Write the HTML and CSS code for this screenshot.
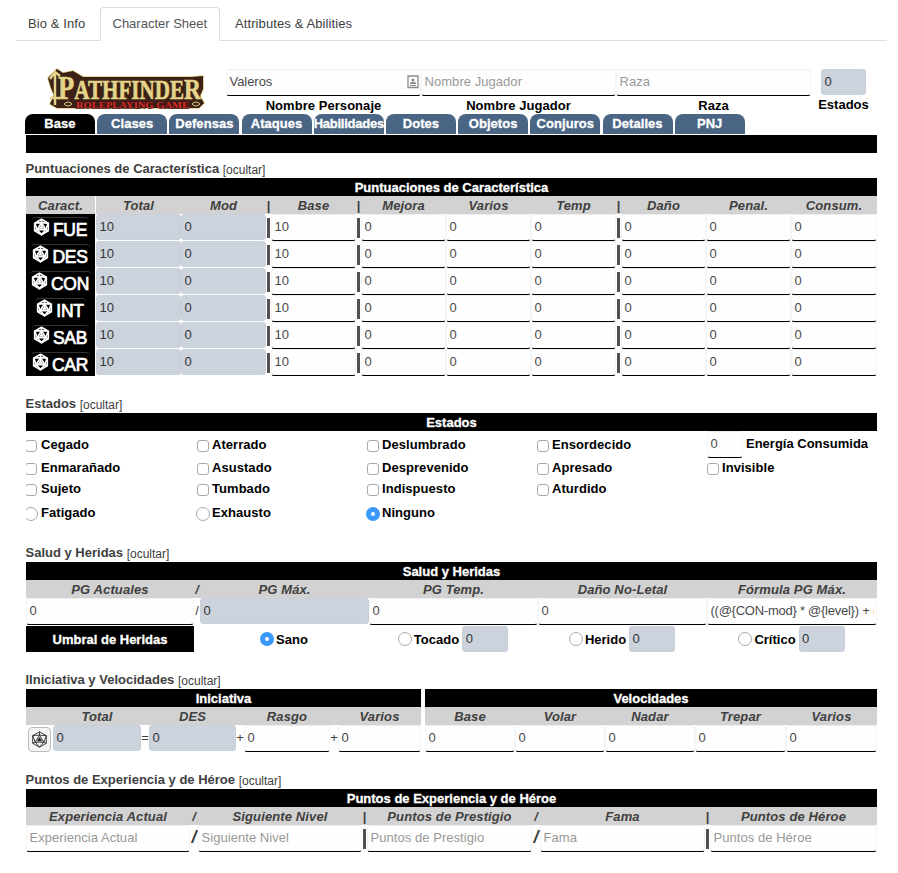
FILE: index.html
```html
<!DOCTYPE html>
<html lang="es">
<head>
<meta charset="utf-8">
<title>Character Sheet</title>
<link rel="stylesheet" href="styles.css">
</head>
<body>
<svg width="0" height="0" class="defs" aria-hidden="true">
  <symbol id="d20" viewBox="0 0 20 20">
    <g fill="none" stroke="currentColor" stroke-linejoin="round">
      <path d="M10 1 18 5.500V14.500L10 19 2 14.500V5.500Z"/>
      <path d="M10 4.800 15 13.200H5Z"/>
      <path d="M10 1V4.800M2 5.500 10 4.800 18 5.500M2 5.500 5 13.200 2 14.500M18 5.500 15 13.200 18 14.500M5 13.200 10 19 15 13.200"/>
    </g>
    <path d="M10 7 13 12H7Z" fill="currentColor"/>
  </symbol>
</svg>

<nav class="page-tabs">
  <a>Bio &amp; Info</a><a class="active">Character Sheet</a><a>Attributes &amp; Abilities</a>
</nav>

<main class="sheet">
  <header class="top">
    <svg class="logo" viewBox="0 0 158 42" role="img">
      <path class="rim" d="M1 10 10 1 16 5 26 3 36 9H145L156 8V21L153 28 157 35 152 40H10L3 36 7 27 4 20Z"/>
      <path class="plate" d="M1 10 10 1 16 5 26 3 36 9H145L156 8V21L153 28 157 35 152 40H10L3 36 7 27 4 20Z"/>
      <path class="sword" d="M8 4V37M3 11 8 4 13 8M3 30H13"/>
      <text class="name" x="11" y="31" textLength="143" lengthAdjust="spacingAndGlyphs"><tspan font-size="34">P</tspan><tspan font-size="27">ATHFINDE</tspan><tspan font-size="30">R</tspan></text>
      <text class="sub" x="29" y="39.500" font-size="9" textLength="113" lengthAdjust="spacingAndGlyphs">ROLEPLAYING GAME</text>
      <path class="curl" d="M17 36q4-4 8 0q-4 4-8 0M145 36q4-4 8 0q-4 4-8 0"/>
    </svg>
    <div class="ident">
      <div class="f named">Valeros
        <svg width="12" height="14" viewBox="0 0 12 14"><path d="M1 1H11V12.500H1Z" fill="none" stroke="#8a8a8a" stroke-width="1.300"/><circle cx="6" cy="5" r="1.500" fill="#8a8a8a"/><path d="M3 9V7.500Q6 6.500 9 7.500V9ZM3 10H9V11H3Z" fill="#8a8a8a"/></svg>
      </div>
      <label>Nombre Personaje</label>
    </div>
    <div class="ident"><div class="f ph">Nombre Jugador</div><label>Nombre Jugador</label></div>
    <div class="ident"><div class="f ph">Raza</div><label>Raza</label></div>
    <div class="ident state"><div class="f off">0</div><label>Estados</label></div>
  </header>

  <nav class="sheet-tabs">
    <a class="active">Base</a><a>Clases</a><a>Defensas</a><a>Ataques</a><a class="tight">Habilidades</a><a>Dotes</a><a>Objetos</a><a>Conjuros</a><a>Detalles</a><a>PNJ</a>
  </nav>
  <div class="bar"></div>

  <section>
    <h2>Puntuaciones de Característica <small>[ocultar]</small></h2>
    <div class="bar">Puntuaciones de Característica</div>
    <div class="scores">
      <div class="row head"><b>Caract.</b><i class="gap"></i><b>Total</b><b>Mod</b><b>|</b><b>Base</b><b>|</b><b>Mejora</b><b>Varios</b><b>Temp</b><b>|</b><b>Daño</b><b>Penal.</b><b>Consum.</b></div>
      <div class="row"><div class="stat"><span><svg><use href="#d20"/></svg>FUE</span></div><i></i><div class="f off">10</div><div class="f off">0</div><i class="v"></i><div class="f">10</div><i class="v"></i><div class="f">0</div><div class="f">0</div><div class="f">0</div><i class="v"></i><div class="f">0</div><div class="f">0</div><div class="f">0</div></div>
      <div class="row"><div class="stat"><span><svg><use href="#d20"/></svg>DES</span></div><i></i><div class="f off">10</div><div class="f off">0</div><i class="v"></i><div class="f">10</div><i class="v"></i><div class="f">0</div><div class="f">0</div><div class="f">0</div><i class="v"></i><div class="f">0</div><div class="f">0</div><div class="f">0</div></div>
      <div class="row"><div class="stat"><span><svg><use href="#d20"/></svg>CON</span></div><i></i><div class="f off">10</div><div class="f off">0</div><i class="v"></i><div class="f">10</div><i class="v"></i><div class="f">0</div><div class="f">0</div><div class="f">0</div><i class="v"></i><div class="f">0</div><div class="f">0</div><div class="f">0</div></div>
      <div class="row"><div class="stat"><span><svg><use href="#d20"/></svg>INT</span></div><i></i><div class="f off">10</div><div class="f off">0</div><i class="v"></i><div class="f">10</div><i class="v"></i><div class="f">0</div><div class="f">0</div><div class="f">0</div><i class="v"></i><div class="f">0</div><div class="f">0</div><div class="f">0</div></div>
      <div class="row"><div class="stat"><span><svg><use href="#d20"/></svg>SAB</span></div><i></i><div class="f off">10</div><div class="f off">0</div><i class="v"></i><div class="f">10</div><i class="v"></i><div class="f">0</div><div class="f">0</div><div class="f">0</div><i class="v"></i><div class="f">0</div><div class="f">0</div><div class="f">0</div></div>
      <div class="row"><div class="stat"><span><svg><use href="#d20"/></svg>CAR</span></div><i></i><div class="f off">10</div><div class="f off">0</div><i class="v"></i><div class="f">10</div><i class="v"></i><div class="f">0</div><div class="f">0</div><div class="f">0</div><i class="v"></i><div class="f">0</div><div class="f">0</div><div class="f">0</div></div>
    </div>
  </section>

  <section>
    <h2>Estados <small>[ocultar]</small></h2>
    <div class="bar">Estados</div>
    <div class="conditions">
      <label><i class="check"></i>Cegado</label><label><i class="check"></i>Aterrado</label><label><i class="check"></i>Deslumbrado</label><label><i class="check"></i>Ensordecido</label><div class="energy"><div class="f">0</div><label>Energía Consumida</label></div>
      <label><i class="check"></i>Enmarañado</label><label><i class="check"></i>Asustado</label><label><i class="check"></i>Desprevenido</label><label><i class="check"></i>Apresado</label><label><i class="check"></i>Invisible</label>
      <label><i class="check"></i>Sujeto</label><label><i class="check"></i>Tumbado</label><label><i class="check"></i>Indispuesto</label><label><i class="check"></i>Aturdido</label><span></span>
      <label><i class="radio"></i>Fatigado</label><label><i class="radio"></i>Exhausto</label><label><i class="radio on"></i>Ninguno</label>
    </div>
  </section>

  <section class="s3">
    <h2>Salud y Heridas <small>[ocultar]</small></h2>
    <div class="bar">Salud y Heridas</div>
    <div class="health">
      <div class="row head"><b>PG Actuales</b><b>/</b><b>PG Máx.</b><b>PG Temp.</b><b>Daño No-Letal</b><b>Fórmula PG Máx.</b></div>
      <div class="row"><div class="f">0</div><span class="op">/</span><div class="f off">0</div><div class="f">0</div><div class="f">0</div><div class="f"><span class="clip">((@{CON-mod} * @{level}) + @{</span></div></div>
      <div class="row wounds"><div class="threshold">Umbral de Heridas</div><span></span>
        <label><i class="radio on"></i>Sano</label>
        <label><i class="radio"></i>Tocado<span class="f off">0</span></label>
        <label><i class="radio"></i>Herido<span class="f off">0</span></label>
        <label><i class="radio"></i>Crítico<span class="f off">0</span></label>
      </div>
    </div>
  </section>

  <section class="s4">
    <h2>IIniciativa y Velocidades <small>[ocultar]</small></h2>
    <div class="pair">
      <div class="init">
        <div class="bar">Iniciativa</div>
        <div class="row head"><b></b><b>Total</b><b></b><b>DES</b><b></b><b>Rasgo</b><b></b><b>Varios</b></div>
        <div class="row"><span class="roll"><svg><use href="#d20"/></svg></span><div class="f off">0</div><span class="op">=</span><div class="f off">0</div><span class="op">+</span><div class="f">0</div><span class="op">+</span><div class="f">0</div></div>
      </div>
      <div class="speeds">
        <div class="bar">Velocidades</div>
        <div class="row head"><b>Base</b><b>Volar</b><b>Nadar</b><b>Trepar</b><b>Varios</b></div>
        <div class="row"><div class="f">0</div><div class="f">0</div><div class="f">0</div><div class="f">0</div><div class="f">0</div></div>
      </div>
    </div>
  </section>

  <section class="s5">
    <h2>Puntos de Experiencia y de Héroe <small>[ocultar]</small></h2>
    <div class="bar">Puntos de Experiencia y de Héroe</div>
    <div class="xp">
      <div class="row head"><b>Experiencia Actual</b><b>/</b><b>Siguiente Nivel</b><b>|</b><b>Puntos de Prestigio</b><b>/</b><b>Fama</b><b>|</b><b>Puntos de Héroe</b></div>
      <div class="row"><div class="f ph">Experiencia Actual</div><span class="slash">/</span><div class="f ph">Siguiente Nivel</div><i class="v"></i><div class="f ph">Puntos de Prestigio</div><span class="slash">/</span><div class="f ph">Fama</div><i class="v"></i><div class="f ph">Puntos de Héroe</div></div>
    </div>
  </section>
</main>
</body>
</html>
```
FILE: styles.css
```css
* { box-sizing: border-box; }
body {
  margin: 0;
  height: 873px;
  overflow: hidden;
  background: #fff;
  color: #404040;
  font: 13px/18px "Liberation Sans", Arial, sans-serif;
}
.defs { position: absolute; }

.page-tabs {
  display: flex;
  height: 41px;
  margin: 0 11px 0 16px;
  padding-top: 7px;
  border-bottom: 1px solid #ddd;
}
.page-tabs a {
  height: 34px;
  padding: 7px 11px 0;
  border: 1px solid transparent;
  border-radius: 4px 4px 0 0;
  letter-spacing: .1px;
}
.page-tabs a:first-child { width: 84px; }
.page-tabs .active {
  width: 120px;
  padding-left: 11.5px;
  color: #555;
  background: #fff;
  border-color: #ddd;
  border-bottom-color: #fff;
  letter-spacing: 0;
}
.page-tabs a:last-child { padding-left: 14px; }

.sheet { width: 851px; margin-left: 26px; }
.top { display: flex; height: 73px; padding-top: 28px; }
.logo { width: 158px; height: 42px; margin: -1px 21px 0 21px; flex: none; }
.rim { fill: none; stroke: #d9c97c; stroke-width: 1.5; }
.plate { fill: #3b2116; }
.sword { fill: none; stroke: #e4d48a; stroke-width: 2.5; }
.curl { fill: none; stroke: #dccb7c; stroke-width: 1; }
.name {
  font-family: "Liberation Serif", serif;
  font-weight: bold;
  fill: #e4d48a;
  stroke: #e4d48a;
  stroke-width: .6px;
}
.sub {
  font-family: "Liberation Serif", serif;
  font-weight: bold;
  fill: #dc2c24;
  stroke: #3b1616;
  stroke-width: 1.5px;
  paint-order: stroke;
}
.ident { width: 195px; }
.ident label { display: block; padding-top: 1px; text-align: center; font-weight: bold; color: #000; letter-spacing: .05px; }
.state { width: 47px; margin-left: 9px; }
.state .f { width: 45px; margin-left: 1px; }
.state label { margin: 0 -2px; white-space: nowrap; letter-spacing: 0; }

.f {
  height: 27px;
  padding: 3px 3px 0 2.5px;
  border: 1px solid #f5f5f5;
  border-top-color: #eee;
  border-bottom-color: #000;
  border-radius: 3px;
  background: #fefefe;
  color: #4a4a4a;
  line-height: 18px;
  white-space: nowrap;
  overflow: hidden;
  letter-spacing: -.05px;
}
.f.off { height: 26px; border-color: #c8d0da; background: #ccd3dd; color: #333; }
.f.ph { color: #999; letter-spacing: .05px; }
.named { display: flex; justify-content: space-between; }
.named svg { margin: 2px -2px 0 0; }

.sheet-tabs { display: flex; gap: 2.2px; height: 20px; margin: 0 0 1px -1px; }
.sheet-tabs a {
  width: 70px;
  flex: none;
  display: flex;
  justify-content: center;
  overflow: hidden;
  border-radius: 8px 8px 0 0;
  background: #4a6484;
  color: #fff;
  font-weight: bold;
  line-height: 19px;
  letter-spacing: .05px;
  -webkit-text-stroke: .3px #fff;
}
.sheet-tabs .tight { letter-spacing: -.25px; }
.sheet-tabs .active { background: #000; }

.bar { height: 18px; background: #000; color: #fff; text-align: center; font-weight: bold; line-height: 20px; -webkit-text-stroke: .3px #fff; }

h2 { margin: 0 0 0 -.5px; height: 25px; padding-top: 7px; font-size: 13px; line-height: 18px; }
h2 small { font-size: 12px; font-weight: normal; position: relative; top: 1px; }
section + section { padding-top: 12px; }
section.s3 { padding-top: 11px; }

.row { display: grid; height: 27px; }
.head { height: 18px; background: #d2d2d2; font-style: italic; text-align: center; line-height: 20px; letter-spacing: .12px; }
.scores .row { grid-template-columns: 69px 1px 85px 85px 5px 85px 5px 85px 85px 85px 5px 85px 85px 86px; }
.gap { background: #fff; }
.v { width: 3px; height: 20px; margin: 4px auto 0; background: #505050; }
.stat { background: #000; color: #fff; display: flex; justify-content: center; padding-top: 3px; font-size: 17.5px; -webkit-text-stroke: .7px #fff; letter-spacing: -.3px; }
.stat span { display: flex; padding: 1px 2px 0; border-top: 1px solid #333; border-radius: 4px; line-height: 22px; height: 22px; }
.stat svg { width: 17px; height: 18px; margin: -1px 3px 0 -1px; stroke-width: 2; }

.conditions { display: grid; grid-template-columns: 171px repeat(4, 170px); grid-template-rows: 27px 20px 22px 26px; overflow: hidden; }
.conditions label { display: flex; align-items: center; color: #000; font-weight: bold; letter-spacing: .05px; }
.check { width: 12px; height: 12px; margin: 2px 3px 0 0; border: 1px solid #aaa; border-radius: 3px; background: #fff; flex: none; }
.radio { width: 14px; height: 14px; margin: 2px 2px 0 -1px; border: 1px solid #aaa; border-radius: 50%; background: #fff; flex: none; }
.radio.on { border: 5px solid #3b99fc; }
.conditions label:nth-child(5n+1) i { margin-left: -1px; margin-right: 4px; }
.conditions label:nth-child(16) i { margin-left: -2px; margin-right: 3px; }
.energy { display: flex; }
.energy .f { width: 36px; margin-right: 3px; }
.energy label { height: 25px; letter-spacing: 0; }

.health .row { grid-template-columns: 168px 6px 169px 169px 169px 170px; }
.op { text-align: center; line-height: 26px; }
.clip { display: block; overflow: hidden; letter-spacing: -.25px; margin-right: -1px; }
.wounds { padding-top: 1px; }
.threshold { height: 26px; background: #000; color: #fff; text-align: center; line-height: 27px; font-weight: bold; -webkit-text-stroke: .3px #fff; }
.wounds label { display: flex; justify-content: center; height: 26px; line-height: 27px; font-weight: bold; color: #000; margin-left: -1px; }
.wounds .radio { margin: 6px 2px 0 0; }
.wounds .f { width: 46px; margin-left: 3px; font-weight: normal; }

.pair { display: grid; grid-template-columns: 395px 452px; gap: 4px; }
.init .row { grid-template-columns: 27px 88px 8px 87px 8px 86px 8px 83px; }
.speeds .row { grid-template-columns: 90px 90px 90px 91px 91px; }
.roll { width: 23px; height: 25px; margin: 2px; border: 1px solid #bbb; border-radius: 4px; background: #f4f4f4; display: grid; place-items: center; color: #222; }
.roll svg { width: 17px; height: 17px; }

.xp .row { grid-template-columns: 164px 8px 164px 5px 165px 8px 165px 5px 167px; }
.slash { font-size: 18px; font-weight: bold; text-align: center; line-height: 25px; font-style: italic; }
```
